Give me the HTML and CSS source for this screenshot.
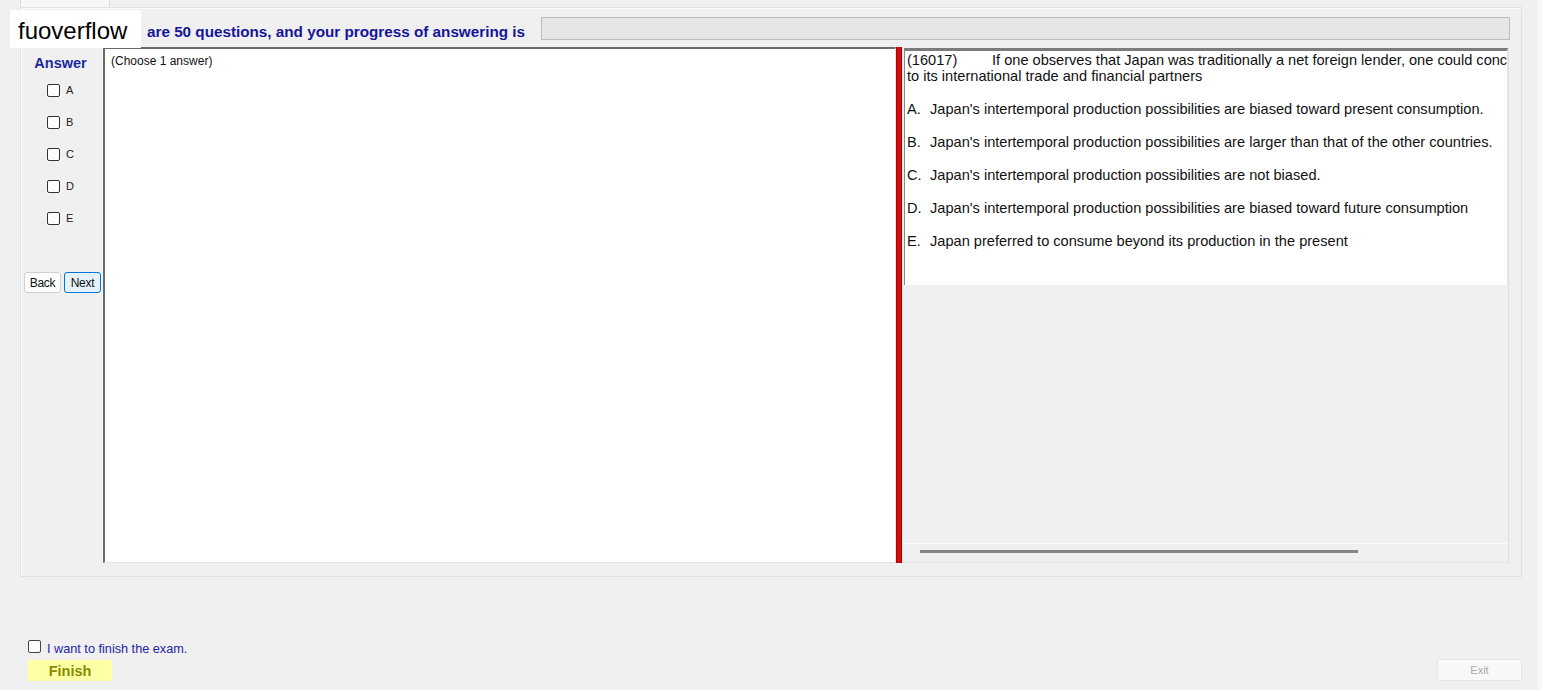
FILE: index.html
```html
<!DOCTYPE html>
<html>
<head>
  <title>Exam</title>
  <link rel="stylesheet" href="styles.css">
</head>
<body>
  <div class="window">
    <!-- Tab strip -->
    <div class="tabs">
      <div class="tab"></div>
    </div>

    <!-- Tab page -->
    <div class="tab-page">
      <div class="progress-row">
        <span class="progress-label">are 50 questions, and your progress of answering is</span>
        <div class="progress-bar"></div>
      </div>

      <div class="exam-body">
        <!-- Answer panel -->
        <div class="answer-panel">
          <div class="answer-title">Answer</div>
          <div class="answer-list">
            <label class="answer-item"><input type="checkbox" class="check"> A</label>
            <label class="answer-item"><input type="checkbox" class="check"> B</label>
            <label class="answer-item"><input type="checkbox" class="check"> C</label>
            <label class="answer-item"><input type="checkbox" class="check"> D</label>
            <label class="answer-item"><input type="checkbox" class="check"> E</label>
          </div>
          <div class="nav-buttons">
            <button class="nav-button">Back</button>
            <button class="nav-button next">Next</button>
          </div>
        </div>

        <!-- Choice text -->
        <div class="choice-box">(Choose 1 answer)</div>

        <!-- Splitter -->
        <div class="splitter"></div>

        <!-- Question -->
        <div class="question-panel">
          <div class="question-box">
            <div class="line"><span class="qid">(16017)</span>If one observes that Japan was traditionally a net foreign lender, one could conclude</div>
            <div class="line">to its international trade and financial partners</div>
            <div class="option"><span class="letter">A.</span>Japan's intertemporal production possibilities are biased toward present consumption.</div>
            <div class="option"><span class="letter">B.</span>Japan's intertemporal production possibilities are larger than that of the other countries.</div>
            <div class="option"><span class="letter">C.</span>Japan's intertemporal production possibilities are not biased.</div>
            <div class="option"><span class="letter">D.</span>Japan's intertemporal production possibilities are biased toward future consumption</div>
            <div class="option"><span class="letter">E.</span>Japan preferred to consume beyond its production in the present</div>
          </div>
          <div class="question-fill"></div>
          <div class="hscroll">
            <div class="hscroll-thumb"></div>
          </div>
        </div>
      </div>
    </div>

    <!-- Footer -->
    <div class="footer">
      <div class="finish-group">
        <label class="finish-check"><input type="checkbox" class="check"> I want to finish the exam.</label>
        <button class="finish-button">Finish</button>
      </div>
      <button class="exit-button">Exit</button>
    </div>

    <!-- Watermark -->
    <div class="watermark">fuoverflow</div>
  </div>
</body>
</html>
```

FILE: styles.css
```css
body {
  font-family: "Liberation Sans", Arial, sans-serif;
  margin: 0;
  padding: 0;
  background-color: #f0f0f0;
}

.window {
  position: relative;
  width: 1542px;
  height: 690px;
  box-sizing: border-box;
  background-color: #f0f0f0;
  border-right: 4px solid #f7f7f7;
}

/* Tab strip */
.tabs {
  height: 7px;
  padding-left: 20px;
  display: flex;
}

.tab {
  width: 90px;
  height: 7px;
  box-sizing: border-box;
  background-color: #f7f7f7;
  border-left: 1px solid #dcdcdc;
  border-right: 1px solid #dcdcdc;
}

.tab-page {
  margin-left: 20px;
  width: 1502px;
  height: 570px;
  box-sizing: border-box;
  border: 1px solid #e2e2e2;
  box-shadow: inset 1px 1px 0 #fbfbfb;
}

/* Progress */
.progress-row {
  height: 39px;
  display: flex;
  align-items: flex-start;
  padding-left: 126px;
  padding-right: 11px;
}

.progress-label {
  margin-top: 16px;
  font-size: 15.25px;
  line-height: 16px;
  font-weight: bold;
  color: #15159a;
}

.progress-bar {
  margin-left: auto;
  margin-top: 9px;
  width: 969px;
  height: 23px;
  box-sizing: border-box;
  background-color: #e6e6e6;
  border: 1px solid #bcbcbc;
}

.exam-body {
  display: flex;
  height: 516px;
  padding-left: 1px;
}

/* Answer panel */
.answer-panel {
  width: 81px;
  flex: none;
}

.answer-title {
  padding-top: 7px;
  padding-right: 4px;
  height: 18px;
  line-height: 18px;
  text-align: center;
  font-size: 14.5px;
  font-weight: bold;
  color: #1a2a9c;
}

.answer-list {
  margin-top: 12px;
}

.answer-item {
  display: flex;
  align-items: flex-start;
  height: 32px;
  padding-left: 25px;
  font-size: 11px;
  line-height: 13px;
  color: #222;
}

.check {
  appearance: none;
  -webkit-appearance: none;
  width: 13px;
  height: 13px;
  margin: 0 6px 0 0;
  box-sizing: border-box;
  border: 1px solid #333;
  border-radius: 2px;
  background-color: #fff;
}

.nav-buttons {
  margin-top: 28px;
  padding-left: 2px;
  display: flex;
  gap: 3px;
}

.nav-button {
  width: 37px;
  height: 21px;
  padding: 0;
  font-family: "Liberation Sans", Arial, sans-serif;
  font-size: 12px;
  letter-spacing: -0.3px;
  color: #111;
  background-color: #fdfdfd;
  border: 1px solid #d0d0d0;
  border-radius: 3px;
}

.nav-button.next {
  background-color: #e5f1fb;
  border-color: #0078d7;
}

/* Choice box */
.choice-box {
  width: 793px;
  flex: none;
  box-sizing: border-box;
  background-color: #fff;
  border-top: 2px solid #6a6a6a;
  border-left: 2px solid #6a6a6a;
  border-right: 1px solid #e3e3e3;
  border-bottom: 1px solid #e3e3e3;
  padding: 5px 6px;
  font-size: 12px;
  line-height: 14px;
  color: #111;
}

.splitter {
  width: 6px;
  flex: none;
  box-sizing: border-box;
  background-color: #d80c0c;
  border-left: 1px solid #b00000;
  border-right: 1px solid #9c0000;
}

/* Question panel */
.question-panel {
  width: 607px;
  flex: none;
  display: flex;
  flex-direction: column;
  box-sizing: border-box;
  border-right: 1px solid #e0e0e0;
  border-bottom: 1px solid #e6e6e6;
}

.question-box {
  margin: 1px 0 0 2px;
  height: 237px;
  box-sizing: border-box;
  background-color: #fff;
  border-top: 3px solid #7c7c7c;
  border-left: 1px solid #8a8a8a;
  border-right: 1px solid #e6e6e6;
  padding: 1px 0 0 2px;
  overflow: hidden;
  font-size: 14.6px;
  line-height: 16px;
  color: #111;
}

.line {
  white-space: nowrap;
}

.qid {
  display: inline-block;
  width: 85px;
}

.option {
  margin-top: 17px;
  white-space: nowrap;
}

.letter {
  display: inline-block;
  width: 23px;
}

.question-fill {
  flex: 1;
}

.hscroll {
  height: 18px;
  border-top: 1px solid #fafafa;
}

.hscroll-thumb {
  margin: 6px 0 0 18px;
  width: 438px;
  height: 3px;
  background-color: #858585;
}

/* Footer */
.footer {
  height: 113px;
  box-sizing: border-box;
  display: flex;
  justify-content: space-between;
  align-items: flex-end;
  padding: 0 16px 9px 28px;
}

.finish-group {
  display: flex;
  flex-direction: column;
  align-items: flex-start;
}

.finish-check {
  display: flex;
  align-items: flex-start;
  height: 20px;
  font-size: 12.7px;
  line-height: 19px;
  color: #2424a4;
}

.finish-check .check {
  margin-top: 0;
  border-color: #444;
}

.finish-button {
  width: 84px;
  height: 21px;
  padding: 0;
  font-family: "Liberation Sans", Arial, sans-serif;
  font-size: 14.5px;
  font-weight: bold;
  color: #8a8a00;
  background-color: #ffffa6;
  border: none;
}

.exit-button {
  width: 85px;
  height: 22px;
  padding: 0;
  font-family: "Liberation Sans", Arial, sans-serif;
  font-size: 11px;
  color: #a8a8a8;
  background-color: #f8f8f8;
  border: 1px solid #e6e6e6;
}

/* Watermark overlay */
.watermark {
  position: absolute;
  left: 10px;
  top: 10px;
  width: 131px;
  height: 38px;
  box-sizing: border-box;
  padding-left: 8px;
  background-color: #fff;
  font-size: 24px;
  line-height: 42px;
  color: #000;
}
```
